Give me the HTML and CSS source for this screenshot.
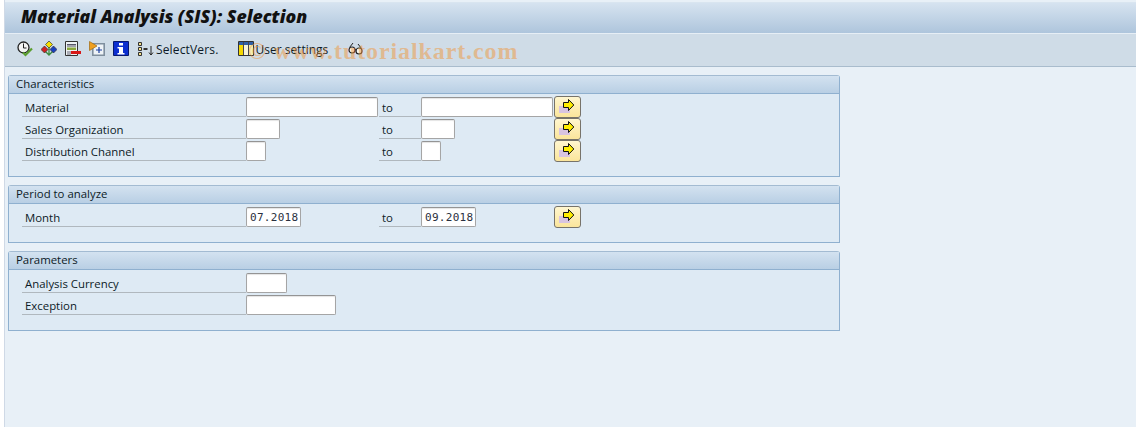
FILE: index.html
```html
<!DOCTYPE html>
<html lang="en">
<head>
    <meta charset="UTF-8">
    <title>Material Analysis (SIS): Selection</title>
    <link rel="stylesheet" href="styles.css">
</head>
<body>
    <div class="window">
        <div class="title-bar">Material Analysis (SIS): Selection</div>

        <div class="toolbar">
            <!-- Execute in background -->
            <svg class="tool-icon" viewBox="0 0 16 16">
                <circle cx="6.500" cy="6.500" r="5.500" fill="#f4f4f4" stroke="#222" stroke-width="1.300"/>
                <path d="M6.500 2.500v4.500h3" fill="none" stroke="#222"/>
                <path d="M6 11.500l2.500 2.500L15 7.500" fill="none" stroke="#5a9e2f" stroke-width="2.200"/>
            </svg>
            <!-- Hierarchy colours -->
            <svg class="tool-icon" viewBox="0 0 16 16">
                <path d="M8 6v8M3 9l5 5 5-5" fill="none" stroke="#3c8a3c" stroke-width="1.300"/>
                <path d="M8 0l3.500 3.500L8 7 4.500 3.500z" fill="#f5e000" stroke="#333" stroke-width=".7"/>
                <path d="M3.500 5L7 8.500 3.500 12 0 8.500z" fill="#d42020" stroke="#333" stroke-width=".7"/>
                <path d="M12.500 5L16 8.500 12.500 12 9 8.500z" fill="#1a3fc0" stroke="#333" stroke-width=".7"/>
            </svg>
            <!-- Delete selection -->
            <svg class="tool-icon" viewBox="0 0 16 16">
                <path d="M.5.500h12v14H.5z" fill="#eef2f4" stroke="#333"/>
                <path d="M2 3.500h9M2 5h9" stroke="#556"/>
                <path d="M2 6.500h9v2.500H2z" fill="#8aa83a"/>
                <path d="M2 11h4M2 13h4" stroke="#667"/>
                <path d="M6 10h10v3H6z" fill="#d81818"/>
            </svg>
            <!-- Add to selection -->
            <svg class="tool-icon" viewBox="0 0 16 16">
                <path d="M3.800 2.800h11.400v11.400H3.800z" fill="#eef3f7" stroke="#7f8f9e" stroke-width="1.600"/>
                <path d="M10 6v6M7 9h6" stroke="#1a3fa0" stroke-width="1.200"/>
                <path d="M.5.500L8 5 .5 9.500z" fill="#f0a020" stroke="#a06a10" stroke-width=".7"/>
            </svg>
            <!-- Info -->
            <svg class="tool-icon" viewBox="0 0 16 16">
                <path d="M.5.500h15v14H.5z" fill="#0b2ed0" stroke="#06186e"/>
                <path d="M6 2h4v2.500H6zM4.500 6H10v6h1.500v1.500h-7V12H6V7.500H4.500z" fill="#fff"/>
            </svg>

            <button class="tool-button tool-button-vers">
                <svg class="tool-icon" viewBox="0 0 16 16">
                    <path d="M.5 1.500h3v3h-3zM.5 6.500h3v3h-3zM.5 11.500h3v3h-3z" fill="#f4e08a" stroke="#333"/>
                    <path d="M5.500 7h4v2h-4z" fill="#333"/>
                    <path d="M13 5v9M11 11.500l2 2.500 2-2.500" fill="none" stroke="#222"/>
                </svg>
                <span>SelectVers.</span>
            </button>

            <button class="tool-button tool-button-user">
                <svg class="tool-icon" viewBox="0 0 16 16">
                    <path d="M.5.500h15v14H.5z" fill="#f8f4d8" stroke="#333"/>
                    <path d="M1 1h14v3H1z" fill="#2f5fa8"/>
                    <path d="M1 4h4v10H1z" fill="#f6d800"/>
                    <path d="M11 4h4v10h-4z" fill="#f4eeb0"/>
                    <path d="M5.500 1v13M10.500 1v13" stroke="#445"/>
                </svg>
                <span>User settings</span>
            </button>

            <svg class="tool-icon tool-icon-glasses" viewBox="0 0 18 16">
                <circle cx="5" cy="9" r="3" fill="#f4f6f8" stroke="#222" stroke-width="1.200"/>
                <circle cx="12" cy="10" r="3" fill="#f4f6f8" stroke="#222" stroke-width="1.200"/>
                <path d="M7.800 8.500l1.500.5M2.500 6.500L6 2M14.500 7.500L11 3" fill="none" stroke="#222"/>
            </svg>

            <div class="watermark">© www.tutorialkart.com</div>
        </div>

        <div class="content">
            <section class="group group-chars">
                <h2 class="group-title">Characteristics</h2>
                <div class="row">
                    <label class="field-label">Material</label>
                    <div class="slot"><input class="input w-132"></div>
                    <label class="to-label">to</label>
                    <div class="slot"><input class="input w-132"></div>
                    <button class="more-button"><svg viewBox="0 0 25 20"><use href="#arrow-icon"/></svg></button>
                </div>
                <div class="row">
                    <label class="field-label">Sales Organization</label>
                    <div class="slot"><input class="input w-34"></div>
                    <label class="to-label">to</label>
                    <div class="slot"><input class="input w-34"></div>
                    <button class="more-button"><svg viewBox="0 0 25 20"><use href="#arrow-icon"/></svg></button>
                </div>
                <div class="row">
                    <label class="field-label">Distribution Channel</label>
                    <div class="slot"><input class="input w-20"></div>
                    <label class="to-label">to</label>
                    <div class="slot"><input class="input w-20"></div>
                    <button class="more-button"><svg viewBox="0 0 25 20"><use href="#arrow-icon"/></svg></button>
                </div>
            </section>

            <section class="group group-period">
                <h2 class="group-title">Period to analyze</h2>
                <div class="row">
                    <label class="field-label">Month</label>
                    <div class="slot"><input class="input input-date w-55" value="07.2018"></div>
                    <label class="to-label">to</label>
                    <div class="slot"><input class="input input-date w-55" value="09.2018"></div>
                    <button class="more-button"><svg viewBox="0 0 25 20"><use href="#arrow-icon"/></svg></button>
                </div>
            </section>

            <section class="group group-params">
                <h2 class="group-title">Parameters</h2>
                <div class="row">
                    <label class="field-label">Analysis Currency</label>
                    <div class="slot"><input class="input w-41"></div>
                </div>
                <div class="row">
                    <label class="field-label">Exception</label>
                    <div class="slot"><input class="input w-90"></div>
                </div>
            </section>
        </div>
    </div>

    <!-- Shared icon for the multiple selection buttons -->
    <svg class="icon-defs" width="0" height="0">
        <symbol id="arrow-icon" viewBox="0 0 25 20">
            <path d="M4 9h11v7H4z" fill="#d8c4e0"/>
            <path d="M8.500 5.500h5v-3L18.800 8l-5.300 5.500v-3h-5z" fill="#ffee00" stroke="#111"/>
        </symbol>
    </svg>
</body>
</html>
```

FILE: styles.css
```css
* {
    box-sizing: border-box;
}

html, body {
    height: 100%;
}

body {
    margin: 0;
    overflow: hidden;
    background-color: #fff;
    font-family: "Open Sans", "Noto Sans", Arial, sans-serif;
    font-size: 11.4px;
    color: #0c1a26;
}

.window {
    height: 427px;
    margin-left: 4px;
    padding-top: 2px;
    border-left: 1px solid #cfd9e6;
    background-color: #e8f0f7;
}

.title-bar {
    height: 31px;
    padding: 1px 0 0 16px;
    border-top: 1px solid #d9e5f0;
    background: linear-gradient(#d6e3f0, #aec5dc);
    font-family: "Open Sans", sans-serif;
    font-size: 17.7px;
    font-weight: 800;
    font-style: italic;
    color: #111;
    white-space: nowrap;
}

/* Toolbar, the watermark lies over it */
.toolbar {
    position: relative;
    display: flex;
    align-items: center;
    height: 34px;
    padding: 0 0 2px 12px;
    border-top: 1px solid #e6eef5;
    border-bottom: 1px solid #a9bccd;
    background-color: #cfdce7;
}

.tool-icon {
    flex: none;
    width: 16px;
    height: 16px;
    margin-right: 8px;
}

.tool-button {
    display: flex;
    align-items: center;
    padding: 0;
    border: none;
    background: none;
    font: inherit;
    font-size: 12px;
    color: inherit;
}

.tool-button .tool-icon {
    margin-right: 2px;
}

.tool-button-vers {
    margin-left: 1px;
    margin-right: 20px;
    letter-spacing: .15px;
}

.tool-button-user {
    margin-right: 19px;
}

.tool-button-user .tool-icon {
    margin-right: 1px;
}

.tool-icon-glasses {
    width: 18px;
}

.watermark {
    position: absolute;
    left: 243px;
    top: 4px;
    font-family: "Liberation Serif", serif;
    font-size: 24px;
    font-weight: bold;
    letter-spacing: .9px;
    color: rgba(240, 150, 60, .5);
    white-space: nowrap;
}

.content {
    padding: 8px 0 0 3px;
}

.group {
    width: 832px;
    margin-bottom: 8px;
    border: 1px solid #8fb0cf;
    border-top-color: #a3bbd2;
    border-radius: 3px 3px 0 0;
    background-color: #deeaf4;
}

.group-chars {
    height: 102px;
}

.group-period {
    height: 58px;
}

.group-params {
    height: 80px;
}

.group-title {
    height: 18px;
    margin: 0 0 2px;
    padding: 0 0 0 7px;
    border-bottom: 1px solid #8fb0cf;
    background: linear-gradient(#d3e2f0, #b9cfe4);
    font-size: 11.4px;
    font-weight: normal;
    line-height: 15px;
}

.row {
    display: flex;
    align-items: stretch;
    height: 22px;
    padding-left: 13px;
}

.field-label {
    width: 224px;
    height: 21px;
    padding: 4px 0 0 3px;
    border-bottom: 1px solid #b0b8be;
    line-height: 16px;
}

.to-label {
    width: 42px;
    height: 21px;
    padding: 4px 0 0 3px;
    border-bottom: 1px solid #b0b8be;
    line-height: 16px;
}

.slot {
    width: 133px;
    padding-top: 1px;
}

.input {
    display: block;
    height: 20px;
    padding: 0 2px;
    border: 1px solid #a5a5a5;
    border-top-color: #949494;
    border-radius: 2px;
    outline: none;
    background-color: #fff;
    box-shadow: inset 0 1px 1px #e4e4e4;
    font-family: "DejaVu Sans Mono", monospace;
    font-size: 11px;
    letter-spacing: .3px;
    color: #2a3040;
}

.input-date {
    padding: 0 1px 0 3px;
}

.w-132 { width: 132px; }
.w-90 { width: 90px; }
.w-55 { width: 55px; }
.w-41 { width: 41px; }
.w-34 { width: 34px; }
.w-20 { width: 20px; }

.more-button {
    flex: none;
    width: 27px;
    height: 22px;
    padding: 0;
    border: 1px solid #77736a;
    border-radius: 3px;
    background: linear-gradient(#fff6cf, #fbe59b);
}

.more-button svg {
    display: block;
    width: 25px;
    height: 20px;
}

.icon-defs {
    position: absolute;
}
```
